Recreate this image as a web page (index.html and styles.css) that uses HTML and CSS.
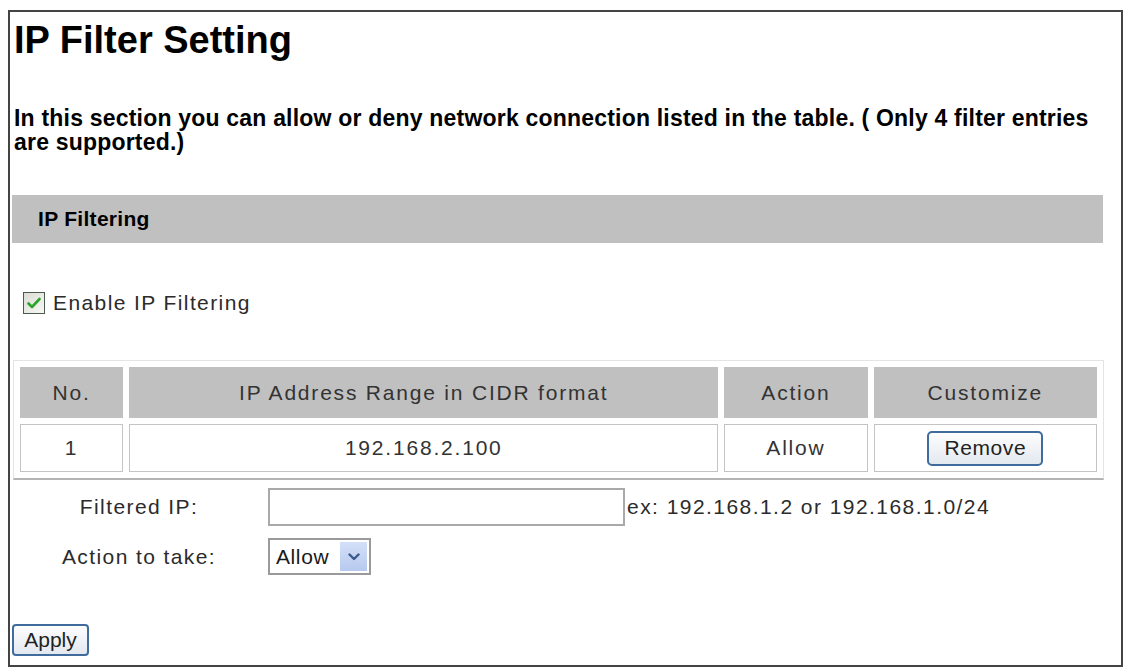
FILE: index.html
```html
<!DOCTYPE html>
<html>
<head>
<meta charset="utf-8">
<title>IP Filter Setting</title>
<link rel="stylesheet" href="styles.css">
</head>
<body>
<div class="frame">
  <h1 class="title">IP Filter Setting</h1>
  <p class="intro">In this section you can allow or deny network connection listed in the table. ( Only 4 filter entries are supported.)</p>
  <div class="section-bar">IP Filtering</div>
  <label class="enable">
    <span class="cb"><svg width="14" height="12" viewBox="0 0 14 12"><path d="M1.5 6.5 L5 10 L12.5 2" fill="none" stroke="#2aa52a" stroke-width="2.6" stroke-linecap="round" stroke-linejoin="round"/></svg></span>
    <span class="enable-text">Enable IP Filtering</span>
  </label>
  <table class="rules">
    <colgroup>
      <col class="c-no"><col class="c-ip"><col class="c-act"><col class="c-cus">
    </colgroup>
    <thead>
      <tr><th>No.</th><th>IP Address Range in CIDR format</th><th>Action</th><th>Customize</th></tr>
    </thead>
    <tbody>
      <tr><td>1</td><td>192.168.2.100</td><td>Allow</td><td><button class="btn remove">Remove</button></td></tr>
    </tbody>
  </table>
  <div class="form-grid">
    <div class="lbl">Filtered IP:</div>
    <div class="field"><span class="input"></span><span class="hint">ex: 192.168.1.2 or 192.168.1.0/24</span></div>
    <div class="lbl">Action to take:</div>
    <div class="field"><span class="select"><span class="sel-val">Allow</span><span class="arrow"><svg width="12" height="8" viewBox="0 0 12 8"><path d="M1.5 1.5 L6 6 L10.5 1.5" fill="none" stroke="#3d5a8f" stroke-width="2.4" stroke-linecap="round" stroke-linejoin="round"/></svg></span></span></div>
  </div>
  <button class="btn apply">Apply</button>
</div>
</body>
</html>
```

FILE: styles.css
```css
html, body {
  margin: 0;
  padding: 0;
  background: #ffffff;
}
body {
  font-family: "Liberation Sans", Arial, sans-serif;
  color: #000;
}
.frame {
  box-sizing: border-box;
  margin: 10px 0 0 8px;
  width: 1115px;
  height: 657px;
  border: 2px solid #444;
}
.title {
  margin: 7px 0 0 4px;
  font-size: 38px;
  line-height: 42px;
  font-weight: bold;
}
.intro {
  margin: 45px 16px 0 4px;
  font-size: 23px;
  line-height: 24px;
  font-weight: bold;
  letter-spacing: 0.2px;
}
.section-bar {
  margin: 41px 0 0 2px;
  width: 1091px;
  height: 48px;
  background: #c0c0c0;
  box-sizing: border-box;
  padding-left: 26px;
  display: flex;
  align-items: center;
  font-size: 21px;
  font-weight: bold;
  letter-spacing: 0.3px;
}
.enable {
  margin: 48px 0 0 13px;
  display: flex;
  align-items: center;
  gap: 8px;
  height: 24px;
}
.cb {
  box-sizing: border-box;
  width: 22px;
  height: 22px;
  border: 1px solid #4a5a50;
  background: linear-gradient(135deg, #dcdcd4, #f8f8f4);
  display: flex;
  align-items: center;
  justify-content: center;
}
.enable-text,
.rules th,
.rules td,
.lbl,
.hint,
.sel-val,
.btn {
  font-size: 21px;
  letter-spacing: 1.4px;
  color: #2b2b2b;
}
.rules {
  margin: 45px 0 0 3px;
  width: 1091px;
  table-layout: fixed;
  border-collapse: separate;
  border-spacing: 6px;
  border: 1px solid #e4e4e4;
  border-bottom: 2px solid #b4b4b4;
}
.c-no { width: 103px; }
.c-ip { width: 588px; }
.c-act { width: 143px; }
.c-cus { width: 223px; }
.rules th,
.rules td {
  letter-spacing: 1.8px;
  color: #333;
}
.rules th {
  background: #c0c0c0;
  height: 51px;
  font-weight: normal;
  text-align: center;
  padding: 0;
}
.rules td {
  box-sizing: border-box;
  height: 48px;
  border: 1px solid #c4c4c4;
  text-align: center;
  padding: 0;
  background: #fff;
}
.btn {
  font-family: "Liberation Sans", Arial, sans-serif;
  padding: 0;
  cursor: pointer;
}
.rules td .remove {
  width: 116px;
  height: 35px;
  border: 2px solid #3f6c9c;
  border-radius: 5px;
  background: linear-gradient(#fdfdfd, #e3e8f0);
  color: #222;
  letter-spacing: 0.6px;
  vertical-align: middle;
}
.form-grid {
  margin-top: 8px;
  display: grid;
  grid-template-columns: 258px 1fr;
  row-gap: 12px;
  align-items: center;
}
.lbl {
  text-align: center;
}
.field {
  display: flex;
  align-items: center;
  gap: 2px;
}
.input {
  box-sizing: border-box;
  width: 357px;
  height: 38px;
  border: 2px solid #a9a9a9;
  background: #fff;
}
.hint {
  letter-spacing: 1.45px;
}
.select {
  box-sizing: border-box;
  width: 103px;
  height: 37px;
  border: 2px solid #9a9a9a;
  display: flex;
  align-items: center;
  justify-content: space-between;
  padding: 2px 2px 2px 6px;
  background: #fff;
}
.sel-val {
  color: #1a1a1a;
  letter-spacing: 0.6px;
}
.arrow {
  width: 27px;
  height: 100%;
  background: linear-gradient(#d4e0f8, #b6c9ee);
  display: flex;
  align-items: center;
  justify-content: center;
}
.apply {
  margin: 49px 0 0 2px;
  width: 77px;
  height: 32px;
  border: 2px solid #3f6c9c;
  border-radius: 4px;
  background: linear-gradient(#fdfdfd, #e3e8f0);
  color: #222;
  letter-spacing: 0;
}
```
